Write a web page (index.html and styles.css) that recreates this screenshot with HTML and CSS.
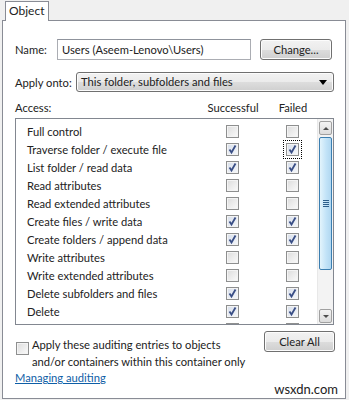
FILE: index.html
```html
<!DOCTYPE html>
<html lang="en">

<head>
    <meta charset="UTF-8">
    <title>Auditing Entry</title>
    <link rel="stylesheet" href="styles.css">
</head>

<body>

    <div class="tabs">
        <div class="tab">Object</div>
    </div>

    <div class="panel">
        <div class="field-row name-row">
            <span class="field-label name-label">Name:</span>
            <div class="textbox">Users (Aseem-Lenovo\Users)</div>
            <button class="win-btn change-btn">Change...</button>
        </div>

        <div class="field-row apply-row">
            <span class="field-label apply-label">Apply onto:</span>
            <div class="select">This folder, subfolders and files<span class="select-arrow"></span></div>
        </div>

        <div class="access-head">
            <span class="access-label">Access:</span>
            <span class="col-head">Successful</span>
            <span class="col-head">Failed</span>
        </div>

        <div class="list">
            <div class="rows" id="rows"></div>
            <div class="scrollbar">
                <div class="sb-btn"><span class="sb-up"></span></div>
                <div class="sb-thumb"><span class="grip"></span></div>
                <div class="sb-track"></div>
                <div class="sb-btn"><span class="sb-down"></span></div>
            </div>
        </div>

        <div class="bottom-row">
            <div class="apply-check">
                <span class="cb"></span>
                <span class="apply-text">Apply these auditing entries to objects<br>and/or containers within this container only</span>
            </div>
            <button class="win-btn clear-btn">Clear All</button>
        </div>

        <a class="help-link" href="#">Managing auditing</a>

        <div class="watermark">wsxdn.com</div>
    </div>

    <script>
        // name, successful, failed
        const entries = [
            ["Full control", false, false],
            ["Traverse folder / execute file", true, true],
            ["List folder / read data", true, true],
            ["Read attributes", false, false],
            ["Read extended attributes", false, false],
            ["Create files / write data", true, true],
            ["Create folders / append data", true, true],
            ["Write attributes", false, false],
            ["Write extended attributes", false, false],
            ["Delete subfolders and files", true, true],
            ["Delete", true, true],
            ["Read permissions", true, true]
        ];

        const tick = '<svg width="11" height="11" viewBox="0 0 11 11"><path d="M2.5 5.5 L4.5 8.5 L8.5 1.5" fill="none" stroke="#3a4f86" stroke-width="1.8"/></svg>';

        function box(checked, focus) {
            let cls = "cb";
            if (checked) cls += " checked";
            if (focus) cls += " focus";
            return '<span class="' + cls + '">' + (checked ? tick : "") + '</span>';
        }

        const rowsEl = document.getElementById("rows");
        entries.forEach((e, i) => {
            const row = document.createElement("div");
            row.className = "row";
            row.innerHTML = '<span class="row-name">' + e[0] + '</span>' +
                box(e[1], false) + box(e[2], i === 1);
            rowsEl.appendChild(row);
        });
    </script>

</body>

</html>
```

FILE: styles.css
```css
* {
    margin: 0;
    padding: 0;
    box-sizing: border-box;
}

body {
    font-family: Lato, "Noto Sans", sans-serif;
    font-size: 11.2px;
    color: #222222;
    background-color: #f0f0f0;
    width: 349px;
    height: 400px;
    overflow: hidden;
    white-space: nowrap;
}

.tabs {
    height: 20px;
    padding: 1px 0 0 5px;
}

.tab {
    position: relative;
    width: 44px;
    height: 20px;
    border: 1px solid #898c95;
    border-bottom: none;
    background-color: #ffffff;
    line-height: 18px;
    padding-left: 3px;
    font-size: 12px;
    z-index: 1;
}

.panel {
    position: relative;
    margin-left: 2px;
    width: 344px;
    height: 379px;
    background-color: #ffffff;
    border: 1px solid #898c95;
    padding: 18px 0 0 12px;
}

.field-row {
    display: flex;
    align-items: center;
}

.name-row {
    height: 21px;
}

.name-label {
    width: 42px;
}

.textbox {
    width: 194px;
    height: 21px;
    border: 1px solid #abadb3;
    border-top-color: #8f939c;
    padding-left: 4px;
    line-height: 19px;
}

.win-btn {
    font-family: inherit;
    font-size: 11.2px;
    color: #222222;
    height: 21px;
    border: 1px solid #707070;
    border-radius: 3px;
    background: linear-gradient(#f2f2f2 0%, #ebebeb 50%, #dddddd 51%, #cfcfcf 100%);
    box-shadow: inset 0 0 0 1px #fcfcfc;
}

.change-btn {
    width: 72px;
    margin-left: 9px;
}

.apply-row {
    margin-top: 12px;
    height: 20px;
}

.apply-label {
    width: 61px;
}

.select {
    position: relative;
    width: 258px;
    height: 20px;
    border: 1px solid #707070;
    border-radius: 3px;
    background: linear-gradient(#f2f2f2 0%, #ebebeb 50%, #dddddd 51%, #cfcfcf 100%);
    box-shadow: inset 0 0 0 1px #fcfcfc;
    padding-left: 4px;
    line-height: 18px;
}

.select-arrow {
    position: absolute;
    right: 6px;
    top: 7px;
    width: 0;
    height: 0;
    border-left: 4px solid transparent;
    border-right: 4px solid transparent;
    border-top: 5px solid #000000;
}

.access-head {
    display: flex;
    margin-top: 8px;
    height: 16px;
    line-height: 16px;
}

.access-label {
    width: 188px;
}

.col-head {
    width: 60px;
    text-align: center;
}

.list {
    display: flex;
    margin-top: 2px;
    width: 319px;
    height: 207px;
    border: 1px solid #828790;
}

.rows {
    flex: 1;
    overflow: hidden;
    padding-top: 3px;
}

.row {
    display: flex;
    align-items: center;
    height: 18px;
}

.row-name {
    width: 210px;
    padding-left: 11px;
}

.cb {
    display: inline-flex;
    align-items: center;
    justify-content: center;
    flex-shrink: 0;
    width: 13px;
    height: 13px;
    border: 1px solid #8e8f8f;
    background: linear-gradient(135deg, #dcdcdc, #fbfbfb);
    box-shadow: inset 0 0 0 1px #f4f4f4;
}

.cb.checked {
    background: linear-gradient(135deg, #d7deea, #f6f8fb);
}

.row .cb + .cb {
    margin-left: 47px;
}

.cb.focus {
    outline: 1px dotted #000000;
    outline-offset: 2px;
}

.scrollbar {
    display: flex;
    flex-direction: column;
    width: 16px;
    padding: 2px 1px 1px 1px;
    background-color: #f3f3f3;
    border-left: 1px solid #e8e8e8;
}

.sb-btn {
    display: flex;
    align-items: center;
    justify-content: center;
    height: 14px;
    border: 1px solid #a0a0a0;
    border-radius: 2px;
    background: linear-gradient(#f3f3f3, #dcdcdc);
}

.sb-up, .sb-down {
    width: 0;
    height: 0;
    border-left: 3px solid transparent;
    border-right: 3px solid transparent;
}

.sb-up {
    border-bottom: 3px solid #4d4d4d;
}

.sb-down {
    border-top: 3px solid #4d4d4d;
}

.sb-thumb {
    display: flex;
    align-items: center;
    justify-content: center;
    margin-top: 2px;
    height: 133px;
    border: 1px solid #3c7fb1;
    border-radius: 2px;
    background: linear-gradient(90deg, #e3f4fc, #c0e2f7 60%, #b1d7f0);
}

.grip {
    width: 6px;
    height: 7px;
    background: repeating-linear-gradient(#2e5f8a 0 1px, transparent 1px 2px);
}

.sb-track {
    flex: 1;
}

.bottom-row {
    display: flex;
    align-items: flex-start;
    margin-top: 6px;
    width: 320px;
}

.apply-check {
    display: flex;
    align-items: flex-start;
    flex: 1;
    padding: 5px 0 0 1px;
}

.apply-check .cb {
    margin-top: 6px;
    margin-right: 3px;
}

.apply-text {
    line-height: 17px;
}

.clear-btn {
    width: 71px;
}

.help-link {
    display: block;
    width: fit-content;
    line-height: 16px;
    color: #0e5ea6;
    text-decoration: underline;
}

.watermark {
    position: absolute;
    right: 7px;
    bottom: 1px;
    font-size: 13px;
    color: #222222;
}
```
